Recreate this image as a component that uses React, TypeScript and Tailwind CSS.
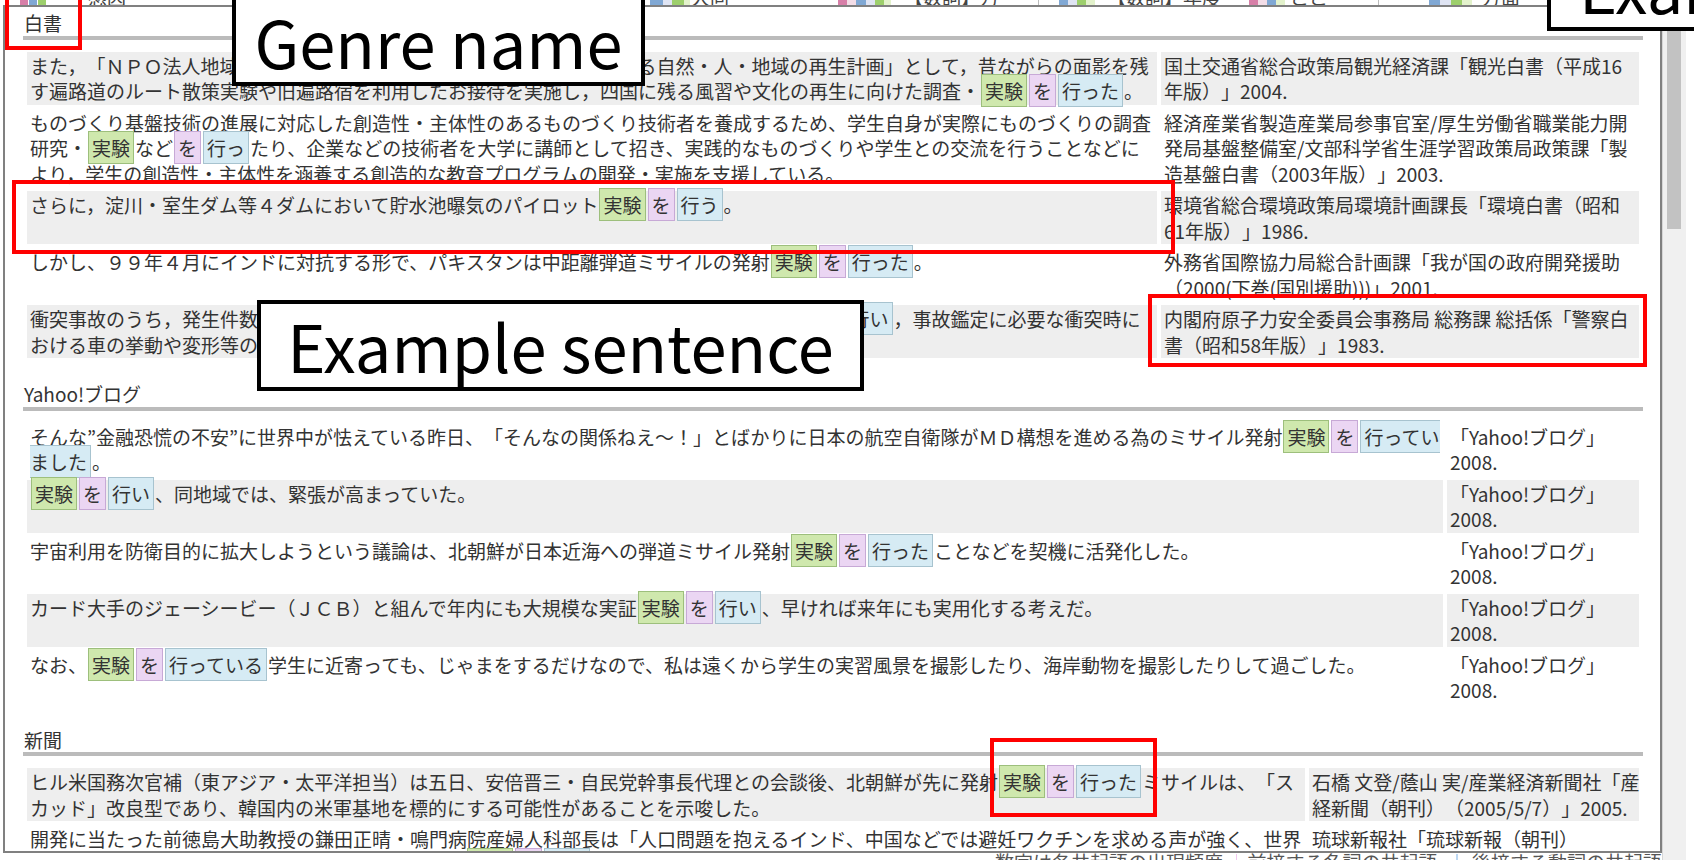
import { Fragment, type ReactNode } from "react";

type Kind = "n" | "p" | "v";

interface Entry {
  text: ReactNode;
  source: ReactNode;
  shaded: boolean;
}

// colours for the three collocation parts
const tagStyle: Record<Kind, string> = {
  n: "bg-[#cfe8ad] border-[#9dbf7c]",
  p: "bg-[#ebd6f3] border-[#c7a9d6]",
  v: "bg-[#d6ebf4] border-[#a7c3cf]",
};

function Tag({ k, children }: { k: Kind; children: ReactNode }) {
  return <span className={`mx-px border px-[3px] py-[2px] ${tagStyle[k]}`}>{children}</span>;
}

// 実験 + を + verb
function Hit({ verb }: { verb: ReactNode }) {
  return (
    <>
      <Tag k="n">実験</Tag>
      <Tag k="p">を</Tag>
      <Tag k="v">{verb}</Tag>
    </>
  );
}

const hakusho: Entry[] = [
  {
    shaded: true,
    text: (
      <>
        また，「ＮＰＯ法人地域交流ネットワーク」が実施する「遍路道における自然・人・地域の再生計画」として，昔ながらの面影を残
        <br />
        す遍路道のルート散策実験や旧遍路宿を利用したお接待を実施し，四国に残る風習や文化の再生に向けた調査・
        <Hit verb="行った" />。
      </>
    ),
    source: (
      <>
        国土交通省総合政策局観光経済課「観光白書（平成16
        <br />
        年版）」2004.
      </>
    ),
  },
  {
    shaded: false,
    text: (
      <>
        ものづくり基盤技術の進展に対応した創造性・主体性のあるものづくり技術者を養成するため、学生自身が実際にものづくりの調査
        <br />
        研究・<Tag k="n">実験</Tag>など<Tag k="p">を</Tag>
        <Tag k="v">行っ</Tag>たり、企業などの技術者を大学に講師として招き、実践的なものづくりや学生との交流を行うことなどに
        <br />
        より，学生の創造性・主体性を涵養する創造的な教育プログラムの開発・実施を支援している。
      </>
    ),
    source: (
      <>
        経済産業省製造産業局参事官室/厚生労働省職業能力開
        <br />
        発局基盤整備室/文部科学省生涯学習政策局政策課「製
        <br />
        造基盤白書（2003年版）」2003.
      </>
    ),
  },
  {
    shaded: true,
    text: (
      <>
        さらに，淀川・室生ダム等４ダムにおいて貯水池曝気のパイロット
        <Hit verb="行う" />。
      </>
    ),
    source: (
      <>
        環境省総合環境政策局環境計画課長「環境白書（昭和
        <br />
        61年版）」1986.
      </>
    ),
  },
  {
    shaded: false,
    text: (
      <>
        しかし、９９年４月にインドに対抗する形で、パキスタンは中距離弾道ミサイルの発射
        <Hit verb="行った" />。
      </>
    ),
    source: (
      <>
        外務省国際協力局総合計画課「我が国の政府開発援助
        <br />
        （2000(下巻(国別援助)))」2001.
      </>
    ),
  },
  {
    shaded: true,
    text: (
      <>
        衝突事故のうち，発生件数の多い出会い頭衝突及び追突事故について，実車による衝突
        <Hit verb="行い" />
        ，事故鑑定に必要な衝突時に
        <br />
        おける車の挙動や変形等のデータを収集した。
      </>
    ),
    source: (
      <>
        内閣府原子力安全委員会事務局 総務課 総括係「警察白
        <br />
        書（昭和58年版）」1983.
      </>
    ),
  },
];

const yahooSource = (
  <>
    「Yahoo!ブログ」
    <br />
    2008.
  </>
);

const yahoo: Entry[] = [
  {
    shaded: false,
    text: (
      <>
        そんな”金融恐慌の不安”に世界中が怯えている昨日、「そんなの関係ねえ～！」とばかりに日本の航空自衛隊がＭＤ構想を進める為のミサイル発射
        <Hit
          verb={
            <>
              行ってい
              <br />
              ました
            </>
          }
        />
        。
      </>
    ),
    source: yahooSource,
  },
  {
    shaded: true,
    text: (
      <>
        <Hit verb="行い" />
        、同地域では、緊張が高まっていた。
      </>
    ),
    source: yahooSource,
  },
  {
    shaded: false,
    text: (
      <>
        宇宙利用を防衛目的に拡大しようという議論は、北朝鮮が日本近海への弾道ミサイル発射
        <Hit verb="行った" />
        ことなどを契機に活発化した。
      </>
    ),
    source: yahooSource,
  },
  {
    shaded: true,
    text: (
      <>
        カード大手のジェーシービー（ＪＣＢ）と組んで年内にも大規模な実証
        <Hit verb="行い" />
        、早ければ来年にも実用化する考えだ。
      </>
    ),
    source: yahooSource,
  },
  {
    shaded: false,
    text: (
      <>
        なお、
        <Hit verb="行っている" />
        学生に近寄っても、じゃまをするだけなので、私は遠くから学生の実習風景を撮影したり、海岸動物を撮影したりして過ごした。
      </>
    ),
    source: yahooSource,
  },
];

const shimbun: Entry[] = [
  {
    shaded: true,
    text: (
      <>
        ヒル米国務次官補（東アジア・太平洋担当）は五日、安倍晋三・自民党幹事長代理との会談後、北朝鮮が先に発射
        <Hit verb="行った" />
        ミサイルは、「ス
        <br />
        カッド」改良型であり、韓国内の米軍基地を標的にする可能性があることを示唆した。
      </>
    ),
    source: (
      <>
        石橋 文登/蔭山 実/産業経済新聞社「産
        <br />
        経新聞（朝刊）（2005/5/7）」2005.
      </>
    ),
  },
  {
    shaded: false,
    text: (
      <>
        開発に当たった前徳島大助教授の鎌田正晴・鳴門病院産婦人科部長は「人口問題を抱えるインド、中国などでは避妊ワクチンを求める声が強く、世界
        <br />
        的な需要がある。動物での実験に続き、人での臨床
        <Hit verb="行い" />
        たい」と話している。
      </>
    ),
    source: (
      <>
        琉球新報社「琉球新報（朝刊）
        <br />
        （2005/5/8）」2005.
      </>
    ),
  },
];

function Section({
  title,
  cols,
  entries,
  className = "",
}: {
  title: string;
  cols: string;
  entries: Entry[];
  className?: string;
}) {
  return (
    <section className={className}>
      <h2 className="pl-px text-[19px] leading-[25.5px]">{title}</h2>
      <div className="h-1 bg-[#bbbbbb]" />
      <div className={`mt-2 grid gap-1 p-1 ${cols}`}>
        {entries.map((e, i) => (
          <Fragment key={i}>
            <div className={`whitespace-nowrap px-[3px] py-px ${e.shaded ? "bg-[#eeeeee]" : ""}`}>
              {e.text}
            </div>
            <div className={`whitespace-nowrap px-[3px] py-px ${e.shaded ? "bg-[#eeeeee]" : ""}`}>
              {e.source}
            </div>
          </Fragment>
        ))}
      </div>
    </section>
  );
}

// Annotation label (black frame, big text)
function Label({ className, children }: { className: string; children: ReactNode }) {
  return (
    <div
      className={`absolute flex items-center whitespace-nowrap border-4 border-black bg-white text-[65px] leading-none text-black ${className}`}
    >
      {children}
    </div>
  );
}

export default function App() {
  return (
    <div className="relative flex h-[860px] w-[1694px] overflow-hidden bg-white font-['Noto_Sans_CJK_JP',sans-serif] text-[#333333] [text-spacing-trim:space-all]">
      <div className="flex w-[1662px] flex-col">
        {/* tail of the collocation table above, mostly scrolled away */}
        <div className="flex h-[5px] items-end overflow-hidden whitespace-nowrap text-[19px] leading-[16px] text-[#444444]">
          <div className="ml-[20px] h-[12px] w-[8px] bg-[#d77fa8]" />
          <div className="ml-px h-[12px] w-[8px] bg-[#80a8d4]" />
          <div className="ml-px h-[12px] w-[8px] bg-[#9dcf6c]" />
          <span className="ml-[42px]">感因</span>
          <div className="ml-[524px] h-[12px] w-[13px] bg-[#80a8d4]" />
          <div className="h-[12px] w-[9px] bg-[#dfe4f3]" />
          <div className="h-[12px] w-[12px] bg-[#9dcf6c]" />
          <div className="h-[12px] w-[6px] bg-[#e3f2cc]" />
          <span className="ml-px">大同</span>
          <div className="ml-[109px] h-[12px] w-[9px] bg-[#d77fa8]" />
          <div className="h-[12px] w-[9px] bg-[#f3dde7]" />
          <div className="h-[12px] w-[10px] bg-[#80a8d4]" />
          <div className="h-[12px] w-[9px] bg-[#dfe4f3]" />
          <div className="h-[12px] w-[9px] bg-[#9dcf6c]" />
          <div className="h-[12px] w-[7px] bg-[#e3f2cc]" />
          <span className="ml-[13px]">【数詞】万</span>
          <div className="ml-[39px] h-[12px] w-px bg-[#bbbbbb]" />
          <div className="ml-[20px] h-[12px] w-[9px] bg-[#80a8d4]" />
          <div className="h-[12px] w-[9px] bg-[#dfe4f3]" />
          <div className="h-[12px] w-[9px] bg-[#9dcf6c]" />
          <div className="h-[12px] w-[9px] bg-[#e3f2cc]" />
          <span className="ml-[12px]">【数詞】年度</span>
          <div className="ml-[28px] h-[12px] w-[9px] bg-[#d77fa8]" />
          <div className="h-[12px] w-[9px] bg-[#f3dde7]" />
          <div className="h-[12px] w-[9px] bg-[#80a8d4]" />
          <div className="h-[12px] w-[9px] bg-[#e3f2cc]" />
          <span className="ml-[5px]">ここ</span>
          <div className="ml-[50px] h-[12px] w-px bg-[#bbbbbb]" />
          <div className="ml-[50px] h-[12px] w-[11px] bg-[#80a8d4]" />
          <div className="h-[12px] w-[11px] bg-[#dfe4f3]" />
          <div className="h-[12px] w-[11px] bg-[#9dcf6c]" />
          <div className="h-[12px] w-[10px] bg-[#e3f2cc]" />
          <span className="ml-[10px]">方面</span>
        </div>

        {/* example list panel */}
        <div className="ml-[3px] h-[848px] w-[1659px] overflow-hidden border-2 border-[#808080] pl-[18px] pr-[17px] pt-[3px] text-[19px] leading-[25.5px]">
          <Section title="白書" cols="grid-cols-[1130px_478px]" entries={hakusho} />
          <Section title="Yahoo!ブログ" cols="grid-cols-[1416px_192px]" entries={yahoo} className="mt-[19px]" />
          <Section title="新聞" cols="grid-cols-[1278px_330px]" entries={shimbun} className="mt-[19px]" />
        </div>

        {/* legend line below, cut by the window */}
        <div className="flex h-[7px] items-start overflow-hidden whitespace-nowrap text-[19px] leading-[25px] text-[#555555]">
          <span className="-mt-[4px] ml-[995px]">数字は各共起語の出現頻度</span>
          <div className="ml-[13px] mt-px h-[14px] w-[14px] bg-[#f0c8ee]" />
          <span className="-mt-[4px] ml-[10px]">前接する名詞の共起語</span>
          <div className="ml-[19px] mt-px h-[14px] w-[16px] bg-[#bcd7f2]" />
          <span className="-mt-[4px] ml-[14px]">後接する動詞の共起語</span>
        </div>
      </div>

      {/* page scrollbar */}
      <div className="h-[860px] w-[24px] border-l border-[#d6d6d6] bg-[#f0f0f0] pl-[4px] pt-[9px]">
        <div className="h-[220px] w-[14px] bg-[#c2c2c2]" />
      </div>

      {/* annotations */}
      <Label className="left-[232px] top-[-4px] h-[90px] w-[413px] justify-center">Genre name</Label>
      <Label className="left-[257px] top-[300px] h-[91px] w-[607px] justify-center">Example sentence</Label>
      <Label className="left-[1547px] top-[-59px] h-[90px] w-[330px] pl-[28px]">Example source</Label>

      <div className="absolute left-[5px] top-[-4px] h-[54px] w-[77px] border-4 border-[#ff0000]" />
      <div className="absolute left-[12px] top-[180px] h-[74px] w-[1163px] border-4 border-[#ff0000]" />
      <div className="absolute left-[1148px] top-[294px] h-[73px] w-[499px] border-4 border-[#ff0000]" />
      <div className="absolute left-[990px] top-[738px] h-[79px] w-[167px] border-4 border-[#ff0000]" />
    </div>
  );
}
